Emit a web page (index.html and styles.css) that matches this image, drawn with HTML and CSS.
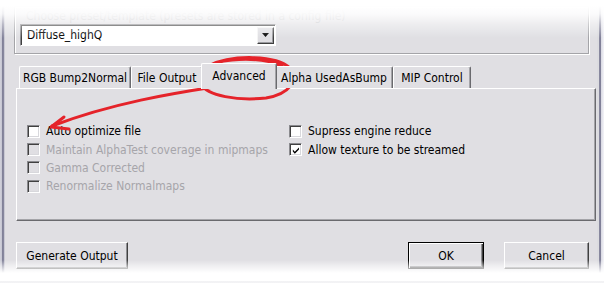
FILE: index.html
```html
<!DOCTYPE html>
<html>
<head>
<meta charset="utf-8">
<link rel="stylesheet" href="styles.css">
</head>
<body>
<div class="window">
  <div class="edge-left"></div>
  <div class="dialog">
    <div class="group">
      <div class="group-label">Choose preset/template (presets are stored in a config file)</div>
      <div class="combo">
        <span class="combo-text">Diffuse_highQ</span>
        <span class="combo-btn"><svg width="7" height="4" viewBox="0 0 7 4"><path d="M0 0h7L3.5 4z" fill="#000"/></svg></span>
      </div>
    </div>

    <div class="tabs">
      <div class="tab w-rgb">RGB Bump2Normal</div>
      <div class="tab w-file">File Output</div>
      <div class="tab active w-adv">Advanced</div>
      <div class="tab w-alpha">Alpha UsedAsBump</div>
      <div class="tab w-mip">MIP Control</div>
    </div>
    <div class="panel">
      <div class="col col-left">
        <label class="check"><span class="box"></span><span>Auto optimize file</span></label>
        <label class="check disabled"><span class="box"></span><span>Maintain AlphaTest coverage in mipmaps</span></label>
        <label class="check disabled"><span class="box"></span><span>Gamma Corrected</span></label>
        <label class="check disabled"><span class="box"></span><span>Renormalize Normalmaps</span></label>
      </div>
      <div class="col">
        <label class="check"><span class="box"></span><span>Supress engine reduce</span></label>
        <label class="check"><span class="box"><svg width="11" height="11" viewBox="0 0 11 11"><path d="M2 4.5l2.2 2.3L8.8 2.2v2.2L4.2 9 2 6.7z" fill="#000"/></svg></span><span>Allow texture to be streamed</span></label>
      </div>
    </div>

    <div class="buttons">
      <div class="btn w-gen">Generate Output</div>
      <div class="btn default w-ok">OK</div>
      <div class="btn w-cancel">Cancel</div>
    </div>
  </div>
  <div class="edge-right"></div>

  <div class="fade-top"></div>
  <div class="fade-bottom"></div>

  <svg class="annotation" width="604" height="284" viewBox="0 0 604 284">
    <g fill="none" stroke="#e5232a" stroke-width="3" stroke-linecap="round" stroke-linejoin="round">
      <path d="M208 66 C232 54 276 55 290 68 C300 79 290 94 266 98 C238 101 207 96 201 84 C195 72 208 62 232 60 C252 58 268 60 282 66"/>
      <path d="M214 87 C175 93 112 103 52 126"/>
      <path d="M64 117 L51 127 L69 129"/>
    </g>
  </svg>
</div>
</body>
</html>
```

FILE: styles.css
```css
html, body {
  margin: 0;
  padding: 0;
}

body {
  width: 604px;
  height: 284px;
  overflow: hidden;
  background: #ffffff;
  font-family: "DejaVu Sans Condensed", "DejaVu Sans", "Liberation Sans", sans-serif;
  font-stretch: condensed;
  font-size: 12px;
  color: #000;
}

.window {
  position: relative;
  display: flex;
  width: 604px;
  height: 284px;
}

.edge-left {
  width: 5px;
  background: linear-gradient(to right, #d2d2dc 0, #c4c4d0 2px, #7e7e96 2px, #8a8aa0 4px, #c8c8d2 4px);
}

.edge-right {
  width: 7px;
  background: linear-gradient(to right, #dcdce0 0, #dcdce0 2px, #8c8ca2 2px, #7c7c94 4px, #d8d8e2 4px, #f4f4f8 7px);
}

.dialog {
  flex: 1;
  box-sizing: border-box;
  background: #e0dfe3;
  padding: 6px 3px 0 9px;
  display: flex;
  flex-direction: column;
}

/* ---------- top group ---------- */
.group {
  box-sizing: border-box;
  height: 48px;
  margin-right: 5px;
  border: 1px solid #a4a4a8;
  box-shadow: inset 1px 1px 0 #ffffff, 1px 1px 0 #ffffff;
  padding: 2px 0 0 5px;
  display: flex;
  flex-direction: column;
}

.group-label {
  height: 14px;
  line-height: 14px;
  color: #c4c4c8;
  white-space: nowrap;
  padding-left: 6px;
}

.combo {
  box-sizing: border-box;
  width: 256px;
  height: 22px;
  margin-top: 1px;
  background: #ffffff;
  border: 1px solid;
  border-color: #8a8a8e #ffffff #ffffff #8a8a8e;
  box-shadow: inset 1px 1px 0 #404040;
  display: flex;
  align-items: center;
  justify-content: space-between;
  padding: 0 1px 0 6px;
}

.combo-text {
  line-height: 14px;
}

.combo-btn {
  box-sizing: border-box;
  width: 17px;
  height: 17px;
  background: #e0dfe3;
  border: 1px solid;
  border-color: #f4f4f4 #404040 #404040 #f4f4f4;
  box-shadow: inset -1px -1px 0 #9a9a9e;
  display: flex;
  align-items: center;
  justify-content: center;
}

/* ---------- tabs ---------- */
.tabs {
  display: flex;
  align-items: flex-end;
  height: 25px;
  margin: 9px 0 0 5px;
  position: relative;
  z-index: 1;
}

.tab {
  box-sizing: border-box;
  height: 22px;
  border-top: 1px solid #ffffff;
  border-left: 1px solid #ffffff;
  border-right: 1px solid #6a6a6e;
  box-shadow: inset -1px 0 0 #a4a4a8;
  border-radius: 2px 2px 0 0;
  background: #e0dfe3;
  display: flex;
  align-items: center;
  justify-content: center;
  padding-top: 1px;
  white-space: nowrap;
}

.tab.active {
  height: 26px;
  margin: 0 -2px -1px;
  padding-bottom: 3px;
  position: relative;
  z-index: 2;
}

.w-rgb { width: 112px; }
.w-file { width: 72px; }
.w-adv { width: 76px; }
.w-alpha { width: 118px; }
.w-mip { width: 78px; }

.panel {
  box-sizing: border-box;
  height: 133px;
  margin: 0 -2px 0 2px;
  border-top: 1px solid #ffffff;
  border-left: 1px solid #ffffff;
  border-right: 1px solid #6a6a6e;
  border-bottom: 1px solid #6a6a6e;
  box-shadow: inset -1px -1px 0 #a4a4a8;
  padding: 33px 0 0 10px;
  display: flex;
}

.col {
  display: flex;
  flex-direction: column;
}

.col-left {
  width: 262px;
}

.check {
  display: flex;
  align-items: center;
  height: 18.4px;
  gap: 6px;
  white-space: nowrap;
}

.box {
  box-sizing: border-box;
  width: 13px;
  height: 13px;
  flex: none;
  background: #ffffff;
  border: 1px solid;
  border-color: #8a8a8e #ffffff #ffffff #8a8a8e;
  box-shadow: inset 1px 1px 0 #404040, inset -1px -1px 0 #d8d8dc;
  display: flex;
  align-items: center;
  justify-content: center;
}

.box svg {
  display: block;
  margin: 1px 0 0 1px;
}

.check.disabled {
  color: #a6a5aa;
}

.check.disabled .box {
  background: #e0dfe3;
}

/* ---------- buttons ---------- */
.buttons {
  display: flex;
  margin: 21px 5px 0 2px;
  gap: 20px;
}

.btn {
  box-sizing: border-box;
  height: 27px;
  background: #e0dfe3;
  border: 1px solid;
  border-color: #ffffff #404040 #404040 #ffffff;
  box-shadow: inset -1px -1px 0 #8e8e92;
  display: flex;
  align-items: center;
  justify-content: center;
  white-space: nowrap;
}

.btn.default {
  border: 1px solid #000;
  box-shadow: inset 1px 1px 0 #ffffff, inset -1px -1px 0 #404040, inset -2px -2px 0 #8e8e92;
  margin-left: auto;
}

.w-gen { width: 112px; }
.w-ok { width: 76px; }
.w-cancel { width: 85px; }

/* ---------- photo edge fades (overlay) ---------- */
.fade-top {
  position: absolute;
  left: 0;
  top: 0;
  width: 604px;
  height: 40px;
  background: linear-gradient(to bottom, #ffffff 0, #ffffff 6px, rgba(255,255,255,0.88) 14px, rgba(255,255,255,0.45) 24px, rgba(255,255,255,0) 38px);
  pointer-events: none;
}

.fade-bottom {
  position: absolute;
  left: 0;
  top: 260px;
  width: 604px;
  height: 24px;
  background: linear-gradient(to bottom, rgba(255,255,255,0) 0, rgba(255,255,255,0.5) 6px, #ffffff 13px, #ffffff 21px, #e6e6ea 22px, #ffffff 23px);
  pointer-events: none;
}

.annotation {
  position: absolute;
  left: 0;
  top: 0;
  pointer-events: none;
}
```
